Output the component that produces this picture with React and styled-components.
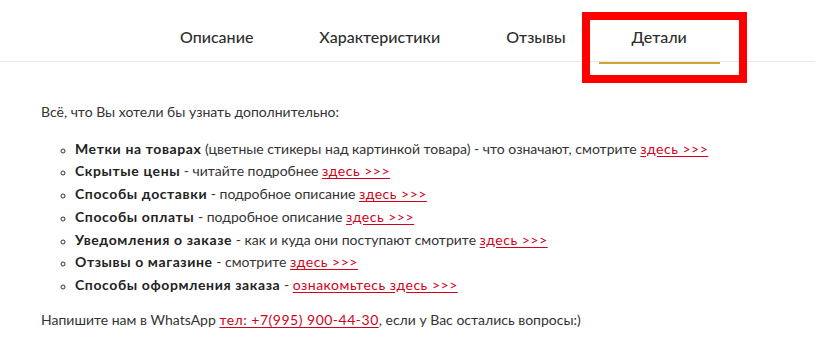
import React from "react";
import styled, { createGlobalStyle } from "styled-components";

const GlobalStyle = createGlobalStyle`
  body {
    margin: 0;
    background: #fff;
    font-family: "Lato", "Noto Sans", sans-serif;
    color: #333;
  }
`;

const Page = styled.div`
  width: 815px;
  height: 364px;
  position: relative;
  overflow: hidden;
`;

const TabBar = styled.div`
  display: flex;
  height: 61px;
  padding-left: 147px;
  border-bottom: 1px solid #e8e8e8;
`;

const Tab = styled.div`
  padding: 11px 33px 0;
  display: flex;
  align-items: center;
  font-size: 16px;
  font-weight: 500;
  color: #2e2e2e;
  position: relative;
  &::after {
    content: "";
    display: ${(p) => (p.$active ? "block" : "none")};
    position: absolute;
    left: 0;
    right: 0;
    bottom: -3px;
    height: 2px;
    background: #cfa336;
  }
`;

const Marker = styled.div`
  position: absolute;
  left: 582px;
  top: 12px;
  width: 149px;
  height: 55px;
  border: 8px solid #ff0000;
`;

const Content = styled.div`
  padding: 39px 41px 0;
  font-size: 14px;
  line-height: 22.7px;
`;

const Intro = styled.p`
  margin: 0 0 14px;
`;

const List = styled.ul`
  margin: 0;
  padding-left: 34px;
  list-style: circle;
  li::marker {
    font-size: 11px;
  }
`;

const Item = styled.li``;

const Strong = styled.b`
  font-weight: 700;
  letter-spacing: 0.6px;
  color: #222;
`;

const Link = styled.a`
  color: #d0021b;
  letter-spacing: 0.5px;
  text-decoration: underline;
  text-underline-offset: 2px;
`;

const Footer = styled.p`
  margin: 12px 0 0;
`;

const items = [
  ["Метки на товарах", " (цветные стикеры над картинкой товара) - что означают, смотрите ", "здесь >>>"],
  ["Скрытые цены", " - читайте подробнее ", "здесь >>>"],
  ["Способы доставки", " - подробное описание ", "здесь >>>"],
  ["Способы оплаты", " - подробное описание ", "здесь >>>"],
  ["Уведомления о заказе", " - как и куда они поступают смотрите ", "здесь >>>"],
  ["Отзывы о магазине", " - смотрите ", "здесь >>>"],
  ["Способы оформления заказа", " - ", "ознакомьтесь здесь >>>"],
];

export default function App() {
  return (
    <Page>
      <GlobalStyle />
      <TabBar>
        <Tab>Описание</Tab>
        <Tab>Характеристики</Tab>
        <Tab>Отзывы</Tab>
        <Tab $active>Детали</Tab>
      </TabBar>
      <Marker />
      <Content>
        <Intro>Всё, что Вы хотели бы узнать дополнительно:</Intro>
        <List>
          {items.map(([b, t, l]) => (
            <Item key={b}>
              <Strong>{b}</Strong>
              {t}
              <Link href="#">{l}</Link>
            </Item>
          ))}
        </List>
        <Footer>
          Напишите нам в WhatsApp <Link href="#">тел: +7(995) 900-44-30</Link>, если у Вас остались вопросы:)
        </Footer>
      </Content>
    </Page>
  );
}
